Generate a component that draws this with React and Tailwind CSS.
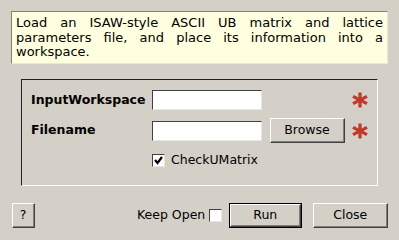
const font = { fontFamily: '"DejaVu Sans", sans-serif' }

const Asterisk = () => (
  <svg width="16" height="16" viewBox="0 0 16 16" aria-hidden="true">
    <g stroke="#c0392b" strokeWidth="3.2" strokeLinecap="butt">
      <line x1="8" y1="0.5" x2="8" y2="15.5" />
      <line x1="1" y1="4.3" x2="15" y2="11.7" />
      <line x1="1" y1="11.7" x2="15" y2="4.3" />
    </g>
  </svg>
)

const Button = ({ children, className = '', isDefault = false }) => (
  <div className={`${isDefault ? 'border border-black' : ''} ${className}`}>
    <div className="h-full w-full border-t border-l border-white border-r border-b border-r-[#404040] border-b-[#404040] bg-[#d4d0c8] flex items-center justify-center text-[12.5px] text-black">
      <div className="h-full w-full flex items-center justify-center border-r border-b border-r-[#808080] border-b-[#808080]">
        {children}
      </div>
    </div>
  </div>
)

const TextInput = () => (
  <div className="w-[110px] h-[20px] bg-white border-t border-l border-[#404040] border-r border-b border-r-[#e8e6e0] border-b-[#e8e6e0]" />
)

const CheckBox = ({ checked }) => (
  <div className="w-[13px] h-[13px] bg-white border-t border-l border-[#404040] border-r border-b border-r-[#e8e6e0] border-b-[#e8e6e0] flex items-center justify-center">
    {checked && (
      <svg width="9" height="9" viewBox="0 0 9 9" aria-hidden="true">
        <path d="M1 4 L3.5 7 L8 1" stroke="black" strokeWidth="2.2" fill="none" />
      </svg>
    )}
  </div>
)

export default function App() {
  return (
    <div className="w-[399px] h-[240px] bg-[#d4d0c8] overflow-hidden text-black" style={font}>
      {/* description */}
      <div className="ml-[11px] mt-[11px] w-[377px] h-[53px] bg-[#ffffe0] border-t border-l border-[#808080] border-r border-b border-r-[#e8e6e0] border-b-[#e8e6e0] px-[4px] pt-[4px] text-[13px] leading-[14.5px] text-justify">
        Load an ISAW-style ASCII UB matrix and lattice parameters file, and place its information into a workspace.
      </div>

      {/* properties group */}
      <div className="ml-[21px] mt-[15px] w-[357px] h-[107px] border-t border-l border-[#202020] border-r border-b border-r-white border-b-white pl-[9px] pt-[10px]">
        <div className="flex items-center h-[20px]">
          <span className="w-[121px] text-[12.5px] font-bold">InputWorkspace</span>
          <TextInput />
          <span className="ml-[90px]"><Asterisk /></span>
        </div>
        <div className="flex items-center h-[25px] mt-[8px]">
          <span className="w-[121px] text-[12.5px] font-bold">Filename</span>
          <TextInput />
          <Button className="ml-[8px] w-[75px] h-[25px]">Browse</Button>
          <span className="ml-[7px]"><Asterisk /></span>
        </div>
        <div className="flex items-center mt-[8px] ml-[121px]">
          <CheckBox checked />
          <span className="ml-[6px] text-[12.5px]">CheckUMatrix</span>
        </div>
      </div>

      {/* bottom buttons */}
      <div className="flex items-center mt-[17px] ml-[12px] h-[25px]">
        <Button className="w-[23px] h-[25px]">?</Button>
        <span className="ml-[102px] text-[12.5px]">Keep Open</span>
        <span className="ml-[4px]"><CheckBox /></span>
        <Button isDefault className="ml-[7px] w-[73px] h-[25px]">Run</Button>
        <Button className="ml-[11px] w-[75px] h-[25px]">Close</Button>
      </div>
    </div>
  )
}
